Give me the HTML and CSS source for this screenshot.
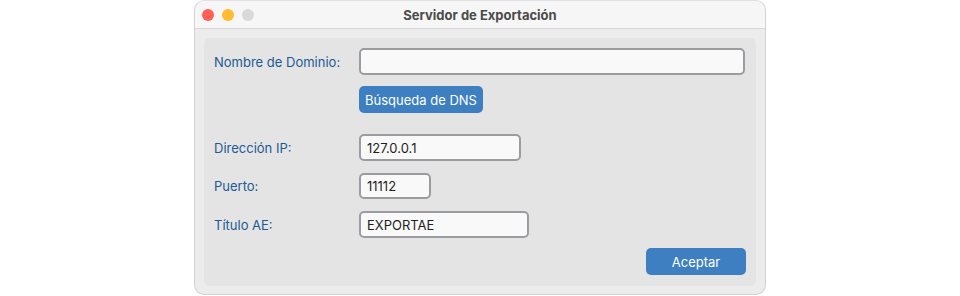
FILE: index.html
```html
<!DOCTYPE html>
<html lang="es">
<head>
    <meta charset="UTF-8">
    <title>Servidor de Exportación</title>
    <link rel="stylesheet" href="styles.css">
</head>
<body>
    <div class="window">
        <div class="titlebar">
            <div class="lights">
                <span class="light red"></span>
                <span class="light yellow"></span>
                <span class="light grey"></span>
            </div>
            <div class="title">Servidor de Exportación</div>
        </div>
        <div class="panel">
            <div class="row">
                <label class="label" for="domain">Nombre de Dominio:</label>
                <input class="field field-wide" id="domain" type="text" value="">
            </div>
            <div class="row row-btn">
                <span class="label"></span>
                <button class="btn btn-dns">Búsqueda de DNS</button>
            </div>
            <div class="row row-ip">
                <label class="label" for="ip">Dirección IP:</label>
                <input class="field field-ip" id="ip" type="text" value="127.0.0.1">
            </div>
            <div class="row row-port">
                <label class="label" for="port">Puerto:</label>
                <input class="field field-port" id="port" type="text" value="11112">
            </div>
            <div class="row row-ae">
                <label class="label" for="aet">Título AE:</label>
                <input class="field field-ae" id="aet" type="text" value="EXPORTAE">
            </div>
            <div class="actions">
                <button class="btn btn-ok">Aceptar</button>
            </div>
        </div>
    </div>
</body>
</html>
```

FILE: styles.css
```css
body {
    margin: 0;
    background: #ffffff;
    font-family: Inter, "Liberation Sans", sans-serif;
    font-size: 13px;
}

.window {
    width: 570px;
    height: 293px;
    margin: 0 auto;
    background: #ececec;
    border: 1px solid #d2d2d2;
    border-top-color: #e2e2e2;
    border-radius: 10px;
    display: flex;
    flex-direction: column;
}

.titlebar {
    height: 27px;
    border-bottom: 1px solid #d8d8d8;
    background: #f6f6f6;
    border-radius: 10px 10px 0 0;
    position: relative;
    display: flex;
    align-items: center;
    justify-content: center;
}

.lights {
    position: absolute;
    left: 7px;
    top: 8px;
    display: flex;
    gap: 8px;
}

.light {
    width: 12px;
    height: 12px;
    border-radius: 50%;
}

.red { background: #fe5f57; }
.yellow { background: #febc2e; }
.grey { background: #d9d9d9; }

.title {
    font-weight: 700;
    color: #4b4b4b;
    font-size: 13px;
}

.panel {
    margin: 9px 9px 8px 9px;
    flex: 1;
    background: #e4e4e4;
    border-radius: 6px;
    padding: 10px 10px 0 10px;
    display: flex;
    flex-direction: column;
}

.row {
    display: flex;
    align-items: center;
    margin-bottom: 11px;
}

.row-btn { margin-bottom: 21px; }
.row-ip { margin-bottom: 12px; }
.row-port { margin-bottom: 12px; }
.row-ae { margin-bottom: 10px; }

.label {
    width: 145px;
    flex: none;
    color: #1d5a94;
    font-size: 13px;
}

.field {
    height: 27px;
    box-sizing: border-box;
    border: 2px solid #9a9c9f;
    border-radius: 5px;
    background: #f9f9f9;
    padding: 0 6px;
    font-family: inherit;
    font-size: 13px;
    color: #1e1e1e;
    outline: none;
}

.field-wide { width: 386px; }
.field-ip { width: 162px; }
.field-port { width: 72px; height: 26px; }
.field-ae { width: 170px; }

.btn {
    height: 27px;
    border: none;
    border-radius: 5px;
    background: #3d7fc0;
    color: #ffffff;
    font-family: inherit;
    font-size: 13px;
    padding: 0;
}

.btn-dns { width: 124px; }

.actions {
    display: flex;
    justify-content: flex-end;
}

.btn-ok { width: 100px; }
```
